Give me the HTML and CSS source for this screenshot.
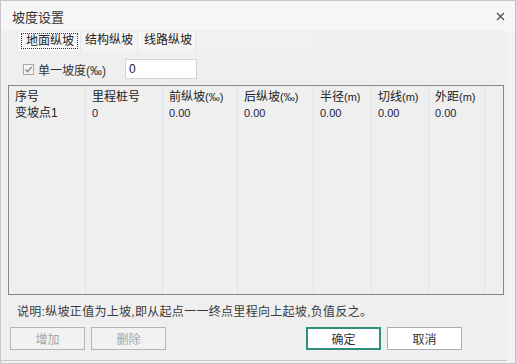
FILE: index.html
```html
<!DOCTYPE html>
<html lang="zh-CN">
<head>
<meta charset="UTF-8">
<title>坡度设置</title>
<link rel="stylesheet" href="styles.css">
</head>
<body>
<div class="dialog">
    <div class="titlebar">
        <span class="title">坡度设置</span>
        <svg class="close" width="9" height="9" viewBox="0 0 9 9"><path d="M1 1L8 8M8 1L1 8" stroke="#555" stroke-width="1.4"/></svg>
    </div>
    <div class="panel">
        <div class="tabbar">
            <div class="tab active"><span class="focus">地面纵坡</span></div>
            <div class="tab">结构纵坡</div>
            <div class="tab">线路纵坡</div>
        </div>

        <div class="slope-row">
            <span class="check">
                <svg width="9" height="9" viewBox="0 0 9 9"><path d="M1.5 4.5L3.6 6.6L7.6 2" fill="none" stroke="#8a8a8a" stroke-width="1.4"/></svg>
            </span>
            <span class="check-label">单一坡度(‰)</span>
            <input class="slope-input" type="text" value="0">
        </div>

        <div class="list">
            <div class="col c1"><div class="hd">序号</div><div class="cell">变坡点1</div></div>
            <div class="col c2"><div class="hd">里程桩号</div><div class="cell num">0</div></div>
            <div class="col c3"><div class="hd">前纵坡<span class="unit">(‰)</span></div><div class="cell num">0.00</div></div>
            <div class="col c4"><div class="hd">后纵坡<span class="unit">(‰)</span></div><div class="cell num">0.00</div></div>
            <div class="col c5"><div class="hd">半径<span class="unit">(m)</span></div><div class="cell num">0.00</div></div>
            <div class="col c6"><div class="hd">切线<span class="unit">(m)</span></div><div class="cell num">0.00</div></div>
            <div class="col c7"><div class="hd">外距<span class="unit">(m)</span></div><div class="cell num">0.00</div></div>
            <div class="col c8"></div>
        </div>

        <div class="note">说明:纵坡正值为上坡,即从起点一一终点里程向上起坡,负值反之。</div>

        <div class="actions">
            <div class="group">
                <button class="btn" disabled>增加</button>
                <button class="btn" disabled>删除</button>
            </div>
            <div class="group">
                <button class="btn btn-ok">确定</button>
                <button class="btn btn-cancel">取消</button>
            </div>
        </div>
    </div>
</div>
</body>
</html>
```
FILE: styles.css
```css
body {
    margin: 0;
    font-family: "Liberation Sans", "Noto Sans CJK SC", sans-serif;
    font-size: 12px;
    color: #222;
    background: #f2f2f2;
}
.dialog {
    width: 516px;
    height: 364px;
    box-sizing: border-box;
    border: 1px solid #c6c6c6;
    background: #f2f2f2;
    display: flex;
    flex-direction: column;
}
.titlebar {
    height: 30px;
    flex: none;
    background: #f6f6f6;
    display: flex;
    align-items: center;
    justify-content: space-between;
    padding: 0 10px 0 11px;
}
.title {
    font-size: 13px;
    color: #333;
}
.panel {
    width: 506px;
    height: 330px;
    box-sizing: border-box;
    background: #efefef;
    border-bottom: 1px solid #c8c8c8;
    display: flex;
    flex-direction: column;
}
.tabbar {
    display: flex;
    margin: 1px 0 0 17px;
    width: 296px;
    height: 19px;
    background: #f1f1f1;
}
.tab {
    box-sizing: border-box;
    height: 19px;
    line-height: 17px;
    padding: 0 4px 0 6px;
    background: #f5f5f5;
    border-right: 1px solid #e6e6e6;
    color: #222;
}
.tab:nth-child(2) { width: 57px; padding: 0 0 0 4px; }
.tab:nth-child(3) { width: 58px; padding: 0 0 0 6px; }
.tab.active {
    width: 63px;
    padding: 1px 2px 0 3px;
    background: #f8f8f8;
}
.focus {
    display: block;
    height: 16px;
    line-height: 14px;
    box-sizing: border-box;
    border: 1px dotted #333;
    padding: 0 3px 0 4px;
}
.slope-row {
    display: flex;
    align-items: center;
    height: 20px;
    margin: 8px 0 0 22px;
}
.check {
    width: 11px;
    height: 11px;
    box-sizing: border-box;
    border: 1px solid #a8a8a8;
    background: #f4f4f4;
    display: flex;
    align-items: center;
    justify-content: center;
}
.check-label {
    margin-left: 4px;
    width: 87px;
    color: #333;
}
.slope-input {
    width: 72px;
    height: 20px;
    box-sizing: border-box;
    border: 1px solid #d4d4d4;
    background: #fff;
    padding: 0 3px;
    font-family: inherit;
    font-size: 12px;
    color: #223;
    outline: none;
}
.list {
    display: flex;
    margin: 6px 0 0 7px;
    width: 496px;
    height: 210px;
    box-sizing: border-box;
    border: 1px solid #828790;
}
.col {
    box-sizing: border-box;
    border-right: 1px solid #dde4ee;
    padding: 3px 0 0 6px;
    line-height: 16px;
    white-space: nowrap;
}
.c1, .c2 { width: 77px; }
.c3 { width: 75px; }
.c4 { width: 76px; }
.c5 { width: 58px; }
.c6 { width: 57px; }
.c7 { width: 56px; }
.c8 { flex: 1; border-right: none; }
.unit { font-size: 11px; }
.num {
    font-size: 11px;
    color: #1e1a40;
}
.note {
    margin: 9px 0 0 16px;
    line-height: 16px;
    letter-spacing: 0.3px;
    color: #3a3a3a;
}
.actions {
    display: flex;
    justify-content: space-between;
    margin: 7px 45px 0 9px;
}
.group {
    display: flex;
    gap: 6px;
}
.btn {
    width: 75px;
    height: 23px;
    box-sizing: border-box;
    border: 1px solid #adadad;
    background: #f2f2f2;
    font-family: inherit;
    font-size: 12px;
    color: #333;
    padding: 0;
}
.btn:disabled {
    color: #a6a6a6;
    border-color: #b4b4b4;
}
.btn-ok {
    background: #fff;
    border: 2px solid #2f8e7c;
}
.btn-cancel {
    background: #fff;
}
```
